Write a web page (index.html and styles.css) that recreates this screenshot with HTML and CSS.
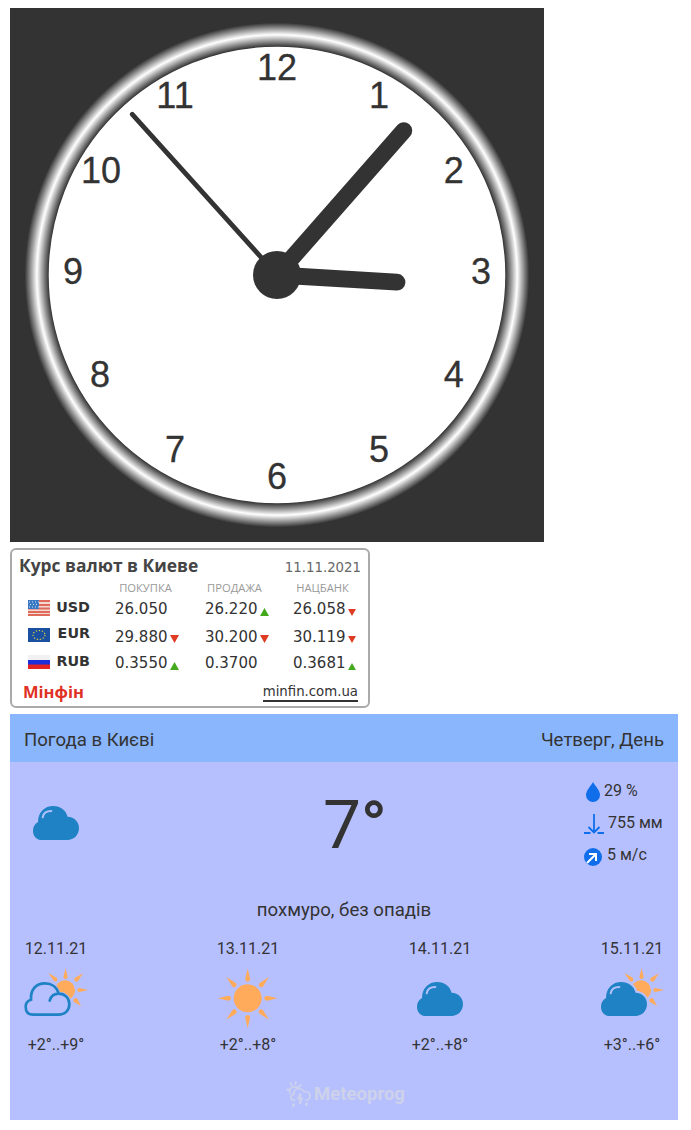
FILE: index.html
```html
<!DOCTYPE html>
<html lang="uk">
<head>
<meta charset="utf-8">
<title>Віджети</title>
<link rel="stylesheet" href="styles.css">
</head>
<body>
<svg width="0" height="0" class="defs">
  <defs>
    <radialGradient id="rim" gradientUnits="userSpaceOnUse" cx="267" cy="267" r="252.3">
      <stop offset="0.905" stop-color="#333"/>
      <stop offset="0.952" stop-color="#fff"/>
      <stop offset="1" stop-color="#333"/>
    </radialGradient>
    <g id="cloud">
      <path fill="#1e82c4" d="M28 102C10 102 0 90 0 74C0 62 6 53 15 48C15 18 36 0 60 0C83 0 99 13 104 32C124 33 138 47 138 66C138 87 123 102 103 102Z"/>
      <path fill="none" stroke="#b7c0ff" stroke-width="6" stroke-linecap="round" d="M29 34C31 22 41 15 55 15"/>
    </g>
    <g id="small-sun" fill="#ffab5b">
      <circle cx="123" cy="67" r="30"/>
      <path d="M125 1l6 26q-1 6-7 6t-6-6zM73 15l25 14q4 4 1 9t-9 1zM177 16l-15 23q-5 4-9 1t-1-10zM192 66l-25 6q-7 0-7-6t6-6zM171 114l-22-13q-3-5 1-9t9-1z"/>
    </g>
    <g id="up"><path fill="#45a91e" d="M4.5 0L9 8H0z"/></g>
    <g id="down"><path fill="#df3a22" d="M0 0H9L4.500 8z"/></g>
  </defs>
</svg>

<svg class="clock" viewBox="0 0 534 534">
  <rect width="534" height="534" fill="#333"/>
  <circle cx="267" cy="267" r="229" fill="#fff"/>
  <circle cx="267" cy="267" r="240.300" fill="none" stroke="url(#rim)" stroke-width="24"/>
  <g class="numerals">
    <text x="369" y="100">1</text><text x="443.700" y="175">2</text><text x="471" y="276.400">3</text>
    <text x="443.700" y="379">4</text><text x="369" y="454">5</text><text x="267" y="481">6</text>
    <text x="165" y="454">7</text><text x="90" y="379">8</text><text x="63" y="276.400">9</text>
    <text x="91" y="175">10</text><text x="165" y="100">11</text><text x="267" y="72">12</text>
  </g>
  <circle cx="267" cy="267" r="24" fill="#333"/>
  <g stroke="#333" stroke-linecap="round">
    <line x1="267" y1="267" x2="387" y2="274.200" stroke-width="16.800"/>
    <line x1="267" y1="267" x2="393.800" y2="122.600" stroke-width="16.800"/>
    <line x1="267" y1="267" x2="122.300" y2="106.300" stroke-width="4.800"/>
  </g>
</svg>

<section class="rates">
  <div class="rates-head"><h2>Курс валют в Киеве</h2><span class="rates-date">11.11.2021</span></div>
  <div class="rates-cols"><span>ПОКУПКА</span><span>ПРОДАЖА</span><span>НАЦБАНК</span></div>
  <div class="rate usd">
    <svg class="flag" viewBox="0 0 22 16"><rect width="22" height="16" fill="#f3d9d4"/><path stroke="#df6a5a" stroke-width="1.800" d="M0 1H22M0 5H22M0 8.500H22M0 12H22M0 15H22"/><rect width="11" height="9" fill="#3979c4"/><path stroke="#d5e3f5" stroke-dasharray="1 2" d="M1 2H11M2 4.500H11M1 7H11"/></svg>
    <b>USD</b>
    <span>26.050</span><i></i>
    <span>26.220</span><svg class="mark" viewBox="0 0 9 8"><use href="#up"/></svg>
    <span>26.058</span><svg class="mark" viewBox="0 0 9 8"><use href="#down"/></svg>
  </div>
  <div class="rate eur">
    <svg class="flag" viewBox="0 0 22 14"><rect width="22" height="14" fill="#1b50a0"/><ellipse cx="11" cy="7" rx="6" ry="4.500" fill="none" stroke="#d2ca4b" stroke-width="1.200" stroke-dasharray="1.300 1.700"/></svg>
    <b>EUR</b>
    <span>29.880</span><svg class="mark" viewBox="0 0 9 8"><use href="#down"/></svg>
    <span>30.200</span><svg class="mark" viewBox="0 0 9 8"><use href="#down"/></svg>
    <span>30.119</span><svg class="mark" viewBox="0 0 9 8"><use href="#down"/></svg>
  </div>
  <div class="rate rub">
    <svg class="flag" viewBox="0 0 22 14"><rect width="22" height="5" fill="#f1f1f4"/><rect y="5" width="22" height="5" fill="#1c2fd8"/><rect y="9.500" width="22" height="4.500" fill="#e32222"/></svg>
    <b>RUB</b>
    <span>0.3550</span><svg class="mark" viewBox="0 0 9 8"><use href="#up"/></svg>
    <span>0.3700</span><i></i>
    <span>0.3681</span><svg class="mark" viewBox="0 0 9 8"><use href="#up"/></svg>
  </div>
  <div class="rates-foot"><strong>Мінфін</strong><a>minfin.com.ua</a></div>
</section>

<section class="weather">
  <header><span>Погода в Києві</span><span>Четверг, День</span></header>
  <div class="now">
    <svg class="now-icon" viewBox="0 0 192 192"><use href="#cloud" x="27" y="42"/></svg>
    <div class="temp">7<span class="degree">°</span></div>
    <div class="stats">
      <div class="stat humidity"><svg width="14" height="20" viewBox="0 0 14 20"><path fill="#106eea" d="M7 0C9 4 14 8 14 13a7 7 0 0 1-14 0C0 8 5 4 7 0z"/></svg><span>29 %</span></div>
      <div class="stat pressure"><svg width="20" height="20" viewBox="0 0 20 20" fill="none" stroke="#106eea" stroke-width="1.800"><path d="M10 0V18M4.500 13L10 18.500L15.500 13M0 19H6.500M13.500 19H20"/></svg><span>755 мм</span></div>
      <div class="stat wind"><svg width="18" height="18" viewBox="0 0 18 18"><circle cx="9" cy="9" r="9" fill="#106eea"/><path fill="none" stroke="#fff" stroke-width="2" d="M3 15L12 6M5 6H12V13"/></svg><span>5 м/с</span></div>
    </div>
  </div>
  <div class="summary">похмуро, без опадів</div>
  <div class="days">
    <div class="day"><span>12.11.21</span>
      <svg viewBox="0 0 192 192"><use href="#small-sun"/><path fill="#b7c0ff" stroke="#b7c0ff" stroke-width="12" d="M28 141C12 141 4 130 4 116C4 105 10 98 20 94C19 66 35 46 63 46C83 46 98 57 103 77C124 76 136 90 136 109C136 128 122 141 104 141Z"/><path fill="#b7c0ff" stroke="#1e82c4" stroke-width="8" stroke-linecap="round" d="M77 98C81 83 91 77 104 77C123 77 136 90 136 109C136 128 122 140 104 140H28C12 140 5 130 5 116C5 105 11 98 21 95C19 66 35 46 63 46C83 46 99 57 104 77"/></svg>
      <span>+2°..+9°</span></div>
    <div class="day"><span>13.11.21</span>
      <svg viewBox="0 0 192 192"><g fill="#ffab5b" transform="translate(95 91)"><circle r="42"/><g id="rays"><path id="ray" d="M0-90L7.500-58Q7-50 0-50T-7.500-58z"/><use href="#ray" transform="rotate(45)"/><use href="#ray" transform="rotate(90)"/><use href="#ray" transform="rotate(135)"/></g><use href="#rays" transform="rotate(180)"/></g></svg>
      <span>+2°..+8°</span></div>
    <div class="day"><span>14.11.21</span>
      <svg viewBox="0 0 192 192"><use href="#cloud" x="27" y="42"/></svg>
      <span>+2°..+8°</span></div>
    <div class="day"><span>15.11.21</span>
      <svg viewBox="0 0 192 192"><use href="#small-sun"/><path transform="translate(3 42)" fill="none" stroke="#b7c0ff" stroke-width="12" d="M60 0C83 0 99 13 104 32C124 33 138 47 138 66"/><use href="#cloud" x="3" y="42"/></svg>
      <span>+3°..+6°</span></div>
  </div>
  <footer>
    <svg width="27" height="27" viewBox="0 0 28 28" fill="none" stroke="#cdd2ea" stroke-width="1.700" stroke-linecap="round"><path d="M9 20H7.500C4 19.500 4.500 14 8 14C8 10 10 8 13 8C16 8 17.500 9 18.500 11C26 10 27 19 21 20M4 13C3 9 5 6 9 6L13 6.500M4.500 2L6 4.500M10 0.800V3.500M15.500 4L14 5.500M0.800 9H3"/><path d="M15 14L13 18H16L14.500 23M8 24.500L7.500 25.500M21.500 23.500L21 24.500" stroke-width="2.500"/></svg>
    <span>Meteoprog</span>
  </footer>
</section>
</body>
</html>
```
FILE: styles.css
```css
* { box-sizing: border-box; }
body { margin: 8px 10px 0; background: #fff; color: #333; font-family: Roboto, sans-serif; }
.defs { position: absolute; }

.clock { display: block; width: 534px; height: 534px; }
.numerals { font: 36px "Liberation Sans", sans-serif; fill: #333; stroke: #333; stroke-width: 0.3px; text-anchor: middle; }

.rates { width: 360px; height: 160px; margin: 6px 0; padding: 5px 7px 0; border: 2px solid #aaa; border-radius: 6px; font-family: "DejaVu Sans", sans-serif; }
.rates-head { display: flex; justify-content: space-between; height: 24px; line-height: 25px; }
.rates-head h2 { margin: 0; font: 700 17.4px/20px "Open Sans", sans-serif; color: #444; }
.rates-date { font-size: 13.3px; color: #666; }
.rates-cols { display: grid; grid-template-columns: 89px 89px 87px; padding-left: 82px; height: 18px; font: 500 11.2px/18px "Open Sans", sans-serif; color: #999; text-align: center; }
.rate { display: grid; grid-template-columns: 22px 40px 80px 36px 54px 34px 54px 9px; padding-left: 9px; height: 27px; font-size: 15px; line-height: 24px; }
.rate b { font-size: 14.3px; line-height: 20px; text-align: right; }
.rate span { margin-left: -1px; }
.rate b + span { margin-left: 25px; }
.rate .flag { width: 22px; height: 16px; margin-top: 3px; }
.rate .mark { width: 9px; height: 8px; margin-top: 11px; }
.rate .mark:last-child { width: 8px; height: 7px; margin-top: 12px; }
.eur .flag, .rub .flag { height: 14px; margin-top: 4px; }
.eur { line-height: 26px; }
.eur b { line-height: 18px; }
.rates-foot { display: flex; justify-content: space-between; align-items: flex-start; padding: 2px 3px 0 4px; }
.rates-foot strong { font: 700 16.5px/24px "Open Sans", sans-serif; color: #df3124; }
.rates-foot a { font-size: 13.3px; line-height: 17px; margin-top: 3px; border-bottom: 2px solid #333; }

.weather { width: 668px; height: 406px; background: #b7c0ff; }
.weather header { display: flex; justify-content: space-between; height: 48px; padding: 0 14px; font-size: 18.6px; line-height: 53px; background: #8ab6fd; }
.now { display: grid; grid-template-columns: 64px 1fr 80px; height: 132px; padding: 12px 14px 0; }
.now-icon { width: 64px; height: 64px; margin-top: 18px; }
.temp { padding-left: 38px; font-size: 67.5px; line-height: 102px; text-align: center; }
.degree { font-weight: 700; }
.stat { display: flex; height: 32px; font-size: 16px; line-height: 33px; }
.humidity svg { margin: 8px 4px 0 2px; }
.pressure svg { margin: 8px 4px 0 0; }
.wind svg { margin: 10px 5px 0 0; }
.summary { height: 34px; font-size: 18.6px; line-height: 32px; text-align: center; }
.days { display: flex; justify-content: space-between; padding: 10px 14px 0; }
.day { width: 64px; text-align: center; font-size: 16px; line-height: 22px; }
.day span { display: block; white-space: nowrap; }
.day svg { display: block; width: 64px; height: 64px; margin: 8px 0 2px; }
.weather footer { display: flex; justify-content: center; align-items: center; gap: 1px; padding: 24px 0 0 3px; font-weight: 700; font-size: 18.5px; line-height: 28px; color: #cdd2ea; }
```
